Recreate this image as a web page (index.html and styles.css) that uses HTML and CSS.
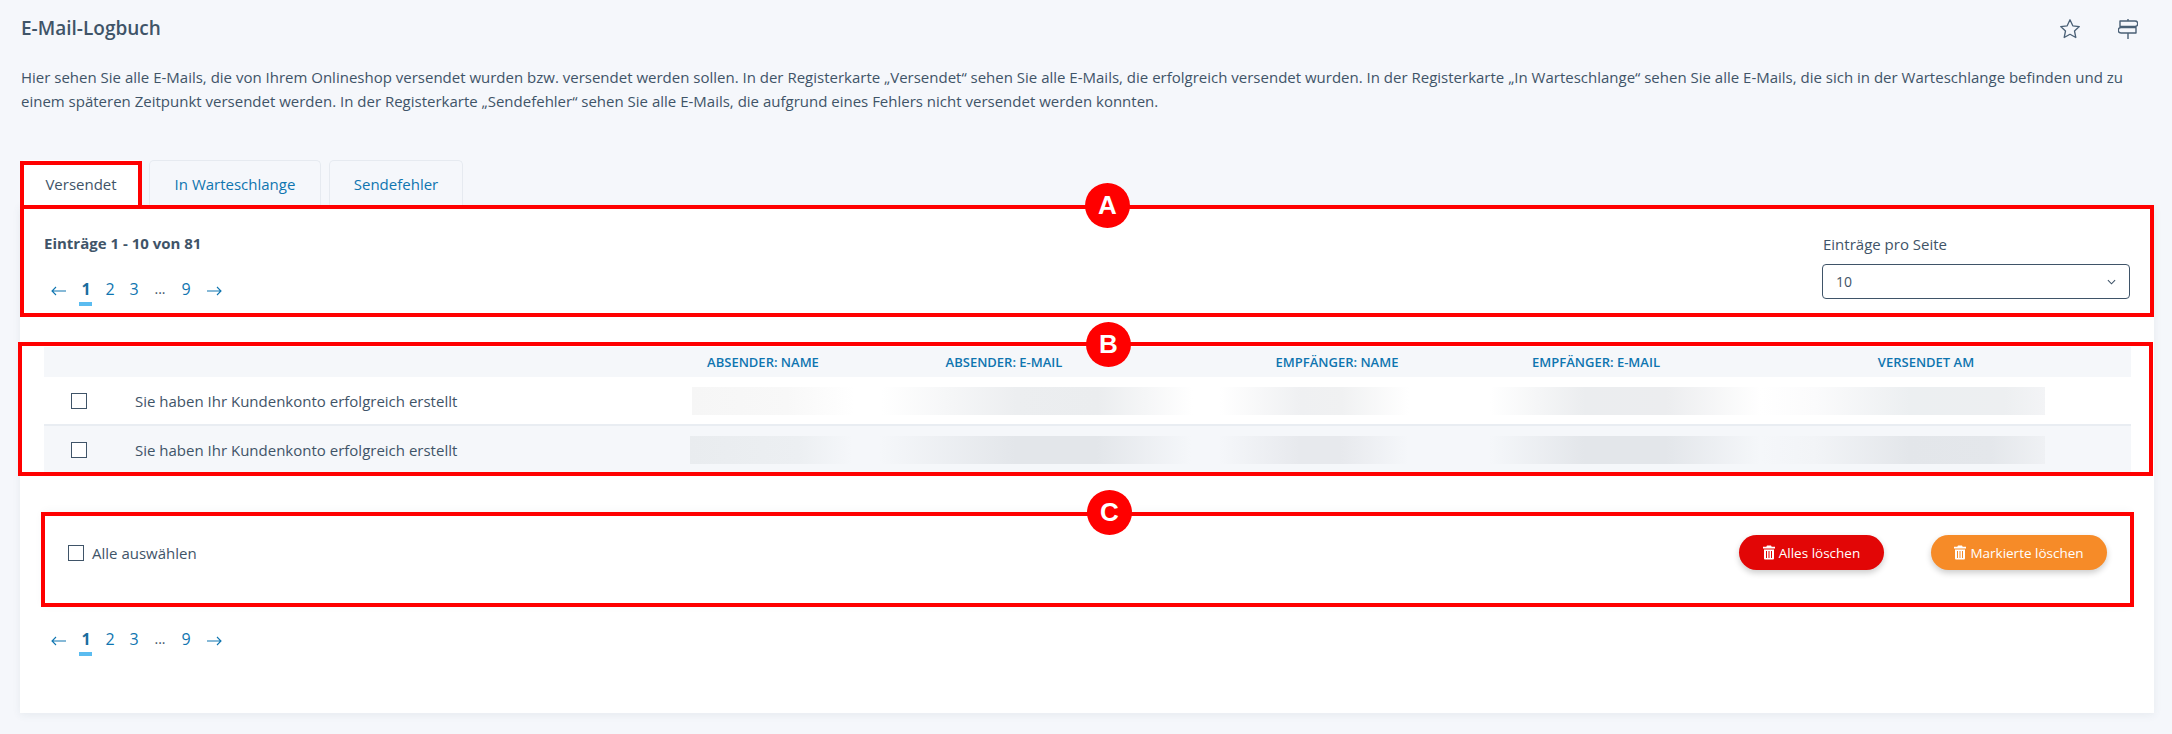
FILE: index.html
```html
<!DOCTYPE html>
<html lang="de">
<head>
<meta charset="utf-8">
<title>E-Mail-Logbuch</title>
<link rel="stylesheet" href="styles.css">
</head>
<body>
<div class="page">
  <header class="head">
    <h1 class="title">E-Mail-Logbuch</h1>
    <div class="head-icons">
      <svg class="icon" viewBox="0 0 20 20" fill="none" stroke="#4a6076" stroke-width="1.3" stroke-linejoin="round"><path d="M10 .8l2.800 6 6.500.8-4.800 4.400 1.300 6.500L10 15.300l-5.800 3.200 1.300-6.500L.7 7.600l6.500-.8z"/></svg>
      <svg class="icon" viewBox="0 0 20 20" fill="none" stroke="#4a6076" stroke-width="1.400" stroke-linejoin="round"><path d="M10 0v2M10 7.500v1M10 14v6"/><path d="M2 2h15a2.700 2.700 0 0 1 0 5.500H2z"/><path d="M18 8.500H3a2.700 2.700 0 0 0 0 5.500h15z"/></svg>
    </div>
  </header>
  <p class="intro">Hier sehen Sie alle E-Mails, die von Ihrem Onlineshop versendet wurden bzw. versendet werden sollen. In der Registerkarte „Versendet“ sehen Sie alle E-Mails, die erfolgreich versendet wurden. In der Registerkarte „In Warteschlange“ sehen Sie alle E-Mails, die sich in der Warteschlange befinden und zu<br>einem späteren Zeitpunkt versendet werden. In der Registerkarte „Sendefehler“ sehen Sie alle E-Mails, die aufgrund eines Fehlers nicht versendet werden konnten.</p>

  <nav class="tabs">
    <a class="tab tab-active">Versendet</a>
    <a class="tab tab-second">In Warteschlange</a>
    <a class="tab tab-third">Sendefehler</a>
  </nav>

  <main class="card">
    <section class="toolbar">
      <div class="toolbar-left">
        <div class="count">Einträge 1 - 10 von 81</div>
        <ul class="pager">
          <li class="pager-arrow pager-prev"><svg viewBox="0 0 15 10" fill="none" stroke="currentColor" stroke-width="1.100"><path d="M15 5H1M5 1L1 5l4 4"/></svg></li>
          <li class="pager-item pager-current">1</li>
          <li class="pager-item">2</li>
          <li class="pager-item">3</li>
          <li class="pager-item pager-dots">...</li>
          <li class="pager-item">9</li>
          <li class="pager-arrow pager-next"><svg viewBox="0 0 15 10" fill="none" stroke="currentColor" stroke-width="1.100"><path d="M0 5h14M10 1l4 4-4 4"/></svg></li>
        </ul>
      </div>
      <div class="perpage">
        <label class="perpage-label">Einträge pro Seite</label>
        <div class="select"><span>10</span><svg class="chevron" viewBox="0 0 10 6" fill="none" stroke="#3f5468" stroke-width="1.200"><path d="M1 1l4 4 4-4"/></svg></div>
      </div>
    </section>

    <section class="table">
      <div class="grid grid-head">
        <span class="col-n1">ABSENDER: NAME</span>
        <span class="col-e1">ABSENDER: E-MAIL</span>
        <span class="col-n2">EMPFÄNGER: NAME</span>
        <span class="col-e2">EMPFÄNGER: E-MAIL</span>
        <span class="col-date">VERSENDET AM</span>
      </div>
      <div class="grid grid-row">
        <span class="box"></span>
        <span class="subject">Sie haben Ihr Kundenkonto erfolgreich erstellt</span>
        <span class="blur blur-light"></span>
      </div>
      <div class="grid grid-row grid-row-alt">
        <span class="box"></span>
        <span class="subject">Sie haben Ihr Kundenkonto erfolgreich erstellt</span>
        <span class="blur blur-dark"></span>
      </div>
    </section>

    <section class="actions">
      <label class="select-all"><span class="box"></span><span>Alle auswählen</span></label>
      <div class="buttons">
        <button class="btn btn-red"><svg class="trash" viewBox="0 0 12 14"><path fill="#fff" fill-rule="evenodd" d="M4 0h4l.7 1.300H12v1.700H0V1.300h3.300zM1 4h10v8.700c0 .8-.5 1.300-1.300 1.300H2.300C1.500 14 1 13.500 1 12.700zM3 5.500v7h1v-7zm2.500 0v7h1v-7zm2.500 0v7h1v-7z"/></svg>Alles löschen</button>
        <button class="btn btn-orange"><svg class="trash" viewBox="0 0 12 14"><path fill="#fff" fill-rule="evenodd" d="M4 0h4l.7 1.300H12v1.700H0V1.300h3.300zM1 4h10v8.700c0 .8-.5 1.300-1.300 1.300H2.300C1.500 14 1 13.500 1 12.700zM3 5.500v7h1v-7zm2.500 0v7h1v-7zm2.500 0v7h1v-7z"/></svg>Markierte löschen</button>
      </div>
    </section>

    <ul class="pager pager-bottom">
      <li class="pager-arrow pager-prev"><svg viewBox="0 0 15 10" fill="none" stroke="currentColor" stroke-width="1.100"><path d="M15 5H1M5 1L1 5l4 4"/></svg></li>
      <li class="pager-item pager-current">1</li>
      <li class="pager-item">2</li>
      <li class="pager-item">3</li>
      <li class="pager-item pager-dots">...</li>
      <li class="pager-item">9</li>
      <li class="pager-arrow pager-next"><svg viewBox="0 0 15 10" fill="none" stroke="currentColor" stroke-width="1.100"><path d="M0 5h14M10 1l4 4-4 4"/></svg></li>
    </ul>
  </main>

  <div class="mark mark-tab"></div>
  <div class="mark mark-a"></div>
  <div class="mark mark-b"></div>
  <div class="mark mark-c"></div>
  <div class="badge badge-a">A</div>
  <div class="badge badge-b">B</div>
  <div class="badge badge-c">C</div>
</div>
</body>
</html>
```

FILE: styles.css
```css
* { box-sizing: border-box; }

html, body { margin: 0; padding: 0; }

body {
  background: #f5f7fb;
  color: #3f5468;
  font-family: "Open Sans", "Liberation Sans", sans-serif;
  font-size: 15px;
  line-height: 24px;
}

.page {
  position: relative;
  width: 2172px;
  height: 734px;
  overflow: hidden;
}

.head {
  display: flex;
  justify-content: space-between;
  align-items: flex-start;
  height: 65px;
  padding: 19px 34px 0 21px;
}

.title {
  margin: 0;
  font-size: 19px;
  font-weight: 600;
  line-height: 18px;
}

.head-icons {
  display: flex;
  gap: 38px;
}

.icon { width: 20px; height: 20px; display: block; }

.intro {
  margin: 0;
  height: 95px;
  padding-left: 21px;
  white-space: nowrap;
}

.tabs {
  display: flex;
  height: 45px;
  padding-left: 20px;
}

.tab {
  display: block;
  height: 45px;
  margin-right: 7px;
  padding-top: 11px;
  text-align: center;
  color: #0f75b0;
  background: #f5f7fb;
  border: 1px solid #e6eaf0;
  border-bottom: 0;
  border-radius: 5px 5px 0 0;
}

.tab-active {
  width: 122px;
  color: #3f5468;
  background: #fff;
  border-color: #fff;
}

.tab-second { width: 172px; }
.tab-third { width: 134px; margin-left: 1px; }

.card {
  width: 2134px;
  height: 508px;
  margin-left: 20px;
  background: #fff;
  box-shadow: 0 2px 8px rgba(63, 84, 104, 0.08);
}

.toolbar {
  display: flex;
  justify-content: space-between;
  height: 142px;
  padding: 26px 24px 0 24px;
}

.count {
  font-weight: 700;
  height: 46px;
}

.pager {
  display: flex;
  gap: 4px;
  margin: 0;
  padding: 0 0 0 7px;
  list-style: none;
  color: #0f75b0;
  height: 28px;
}

.pager-item {
  position: relative;
  width: 20px;
  text-align: center;
  font-size: 16px;
}

.pager-current {
  font-weight: 700;
  color: #1a6d9e;
}

.pager-current::after {
  content: "";
  position: absolute;
  left: 3px;
  top: 25px;
  width: 13px;
  height: 4px;
  background: #5bbcf0;
}

.pager-dots { width: 24px; font-size: 14px; color: #3f5468; }

.pager-arrow { width: 15px; display: flex; align-items: center; }
.pager-arrow svg { width: 15px; height: 10px; display: block; }
.pager-prev { margin-right: 6px; }
.pager-next { margin-left: 7px; }

.perpage { width: 308px; padding-top: 1px; }

.perpage-label { display: block; height: 32px; padding-left: 1px; }

.select {
  display: flex;
  justify-content: space-between;
  align-items: center;
  width: 308px;
  height: 35px;
  padding: 0 13px 0 13px;
  border: 1px solid #3f5468;
  border-radius: 4px;
  font-size: 14px;
}

.chevron { width: 9px; height: 6px; display: block; }

.table { margin-left: 24px; width: 2087px; }

.grid {
  display: grid;
  grid-template-columns: 70px 578px 142px 340px 326px 192px 115px 238px 86px;
  align-items: center;
}

.grid-head {
  height: 30px;
  background: #f5f7fa;
  color: #0f75b0;
  font-size: 13px;
  font-weight: 600;
  text-align: center;
}

.col-n1 { grid-column: 3; }
.col-e1 { grid-column: 4; }
.col-n2 { grid-column: 5; }
.col-e2 { grid-column: 6; }
.col-date { grid-column: 8; }

.grid-row {
  height: 49px;
  border-bottom: 2px solid #e9edf2;
}

.grid-row-alt {
  background: #f5f7fa;
  border-bottom: 0;
  height: 47px;
}

.box {
  display: block;
  width: 16px;
  height: 16px;
  border: 1px solid #3f5468;
  background: #fff;
}

.grid-row .box { justify-self: center; }
.subject { padding-left: 21px; }

.blur {
  grid-column: 3 / span 6;
  height: 28px;
}

.blur-light {
  background: linear-gradient(90deg, #f6f6f6 0, #f8f8f8 7%, #fff 12%, #fff 14%, #eceef0 24%, #ebedef 30%, #fff 37%, #fff 39%, #eff0f2 45%, #f0f1f2 48%, #fff 53%, #fff 59%, #ebedef 66%, #ecedef 72%, #fff 79%, #fbfbfc 83%, #eceff1 90%, #edeff1 97%, #f3f4f6 100%);
}

.blur-dark {
  margin-left: -2px;
  background: linear-gradient(90deg, #e9ecef 0, #eceff2 8%, #f5f7fa 12%, #f5f7fa 14%, #e3e6ea 24%, #e3e6ea 30%, #f5f7fa 37%, #f5f7fa 39%, #e7e9ed 45%, #e7e9ed 48%, #f5f7fa 53%, #f5f7fa 59%, #e3e6ea 66%, #e3e6ea 72%, #f5f7fa 79%, #f2f4f7 83%, #e3e6ea 90%, #e4e7eb 96%, #eff1f4 100%);
}

.actions {
  display: flex;
  justify-content: space-between;
  width: 2086px;
  height: 91px;
  margin: 42px 0 0 24px;
  padding: 20px 23px 0 24px;
  box-shadow: 0 -2px 10px rgba(63, 84, 104, 0.07);
}

.select-all {
  display: flex;
  align-items: center;
  gap: 8px;
  height: 34px;
  padding-top: 1px;
}

.buttons { display: flex; gap: 47px; }

.btn {
  display: flex;
  align-items: center;
  justify-content: center;
  gap: 4px;
  height: 35px;
  padding: 0;
  border: 0;
  border-radius: 18px;
  color: #fff;
  font-family: inherit;
  font-size: 13.500px;
  box-shadow: 0 3px 6px rgba(0, 0, 0, 0.2);
}

.trash { width: 12px; height: 15px; display: block; }

.btn-red { width: 145px; background: #e20606; }
.btn-orange { width: 176px; background: #f68b28; }

.pager-bottom { margin-top: 21px; padding-left: 31px; }

.mark {
  position: absolute;
  border: 4px solid #ff0000;
  pointer-events: none;
}

.mark-tab { left: 20px; top: 161px; width: 122px; height: 48px; }
.mark-a { left: 20px; top: 205px; width: 2134px; height: 112px; }
.mark-b { left: 18px; top: 342px; width: 2135px; height: 134px; }
.mark-c { left: 41px; top: 512px; width: 2093px; height: 95px; }

.badge {
  position: absolute;
  width: 45px;
  height: 45px;
  border-radius: 50%;
  background: #ff0000;
  color: #fff;
  font-family: "Liberation Sans", Arial, sans-serif;
  font-size: 26px;
  font-weight: 700;
  line-height: 45px;
  text-align: center;
}

.badge-a { left: 1085px; top: 183px; }
.badge-b { left: 1086px; top: 322px; }
.badge-c { left: 1087px; top: 490px; }
```
